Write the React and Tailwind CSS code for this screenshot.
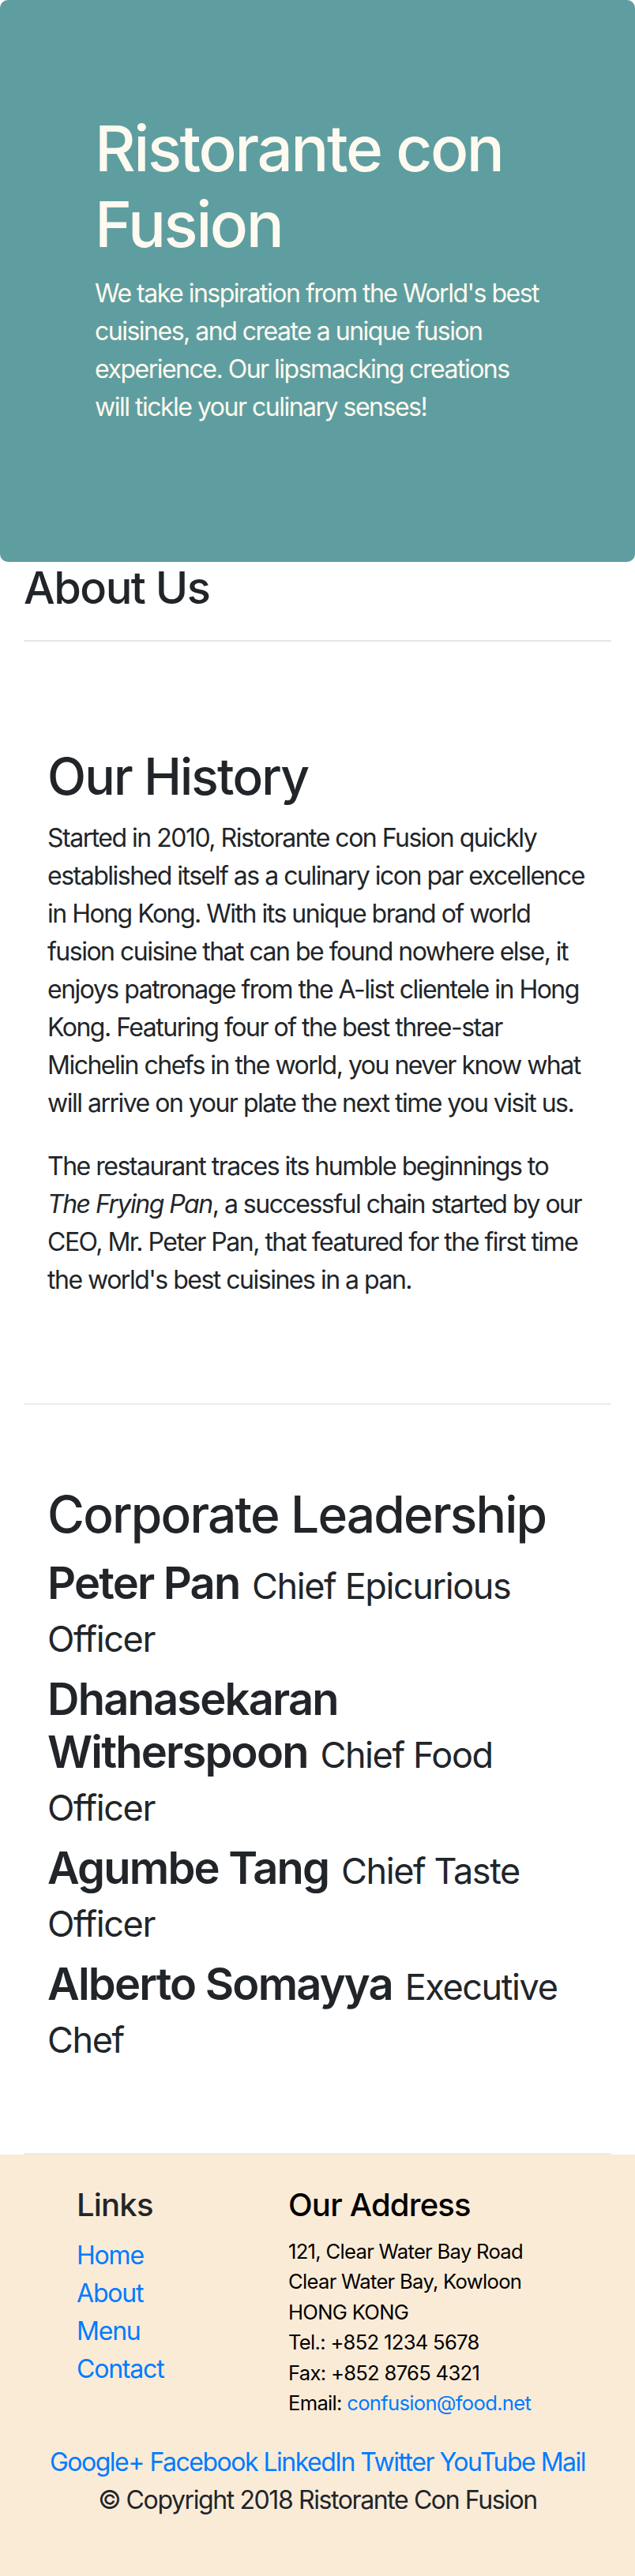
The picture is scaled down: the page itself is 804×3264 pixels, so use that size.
import React from 'react'

const leaders = [
  { name: 'Peter Pan', role: 'Chief Epicurious Officer' },
  { name: 'Dhanasekaran Witherspoon', role: 'Chief Food Officer' },
  { name: 'Agumbe Tang', role: 'Chief Taste Officer' },
  { name: 'Alberto Somayya', role: 'Executive Chef' },
]

const social = ['Google+', 'Facebook', 'LinkedIn', 'Twitter', 'YouTube', 'Mail']
const links = ['Home', 'About', 'Menu', 'Contact']

const body = 'text-[32px] leading-[48px] tracking-[-1.5px] whitespace-nowrap'

export default function App(){
  return (
    <div className="w-[804px] bg-white text-[#212529] font-[Inter,sans-serif]">
      {/* jumbotron */}
      <header className="bg-[#5f9ea0] text-[#fffaf0] rounded-[10px] px-[120px] py-[140px]">
        <h1 className="text-[80px] leading-[96px] font-medium tracking-[-2.5px] mb-4">Ristorante con Fusion</h1>
        <p className={body + ' mb-8'}>
          We take inspiration from the World's best<br />
          cuisines, and create a unique fusion<br />
          experience. Our lipsmacking creations<br />
          will tickle your culinary senses!
        </p>
      </header>

      <main className="px-[30px]">
        <h3 className="text-[56px] leading-[67px] font-medium tracking-[-1.5px]">About Us</h3>
        <hr className="mt-8 mb-8 border-t-2 border-[#e6e6e6]" />

        <section className="px-[30px] py-[100px] border-b-2 border-[#ebebeb]">
          <h2 className="text-[64px] leading-[77px] font-medium tracking-[-1.8px] mb-4">Our History</h2>
          <p className={body + ' mb-8'}>
            Started in 2010, Ristorante con Fusion quickly<br />
            established itself as a culinary icon par excellence<br />
            in Hong Kong. With its unique brand of world<br />
            fusion cuisine that can be found nowhere else, it<br />
            enjoys patronage from the A-list clientele in Hong<br />
            Kong. Featuring four of the best three-star<br />
            Michelin chefs in the world, you never know what<br />
            will arrive on your plate the next time you visit us.
          </p>
          <p className={body + ' mb-8'}>
            The restaurant traces its humble beginnings to<br />
            <em>The Frying Pan</em>, a successful chain started by our<br />
            CEO, Mr. Peter Pan, that featured for the first time<br />
            the world's best cuisines in a pan.
          </p>
        </section>

        <section className="px-[30px] py-[100px] border-b-2 border-[#ebebeb]">
          <h2 className="text-[64px] leading-[77px] font-medium tracking-[-1.8px] mb-4">Corporate Leadership</h2>
          <div className="max-w-[660px]">
            {leaders.map(l => (
              <div key={l.name} className="text-[56px] leading-[67px] mb-[13px]">
                <span className="font-semibold tracking-[-1.8px]">{l.name}</span>{' '}
                <span className="text-[45px] leading-[50px] tracking-[-1.4px]">{l.role}</span>
              </div>
            ))}
          </div>
        </section>
      </main>

      {/* footer */}
      <footer className="bg-[#faebd7] py-10">
        <div className="flex">
          <div className="w-[268px] ml-[97px]">
            <h5 className="text-[40px] leading-[48px] font-medium mb-4 tracking-[-0.8px]">Links</h5>
            <ul className="text-[32px] leading-[48px] text-[#007bff] tracking-[-1.2px] mb-8">
              {links.map(t => <li key={t}><a>{t}</a></li>)}
            </ul>
          </div>
          <div>
            <h5 className="text-[40px] leading-[48px] font-medium mb-4 text-black tracking-[-0.8px]">Our Address</h5>
            <address className="not-italic text-[25.6px] leading-[38.4px] text-black tracking-[-0.7px] mb-8">
              121, Clear Water Bay Road<br />
              Clear Water Bay, Kowloon<br />
              HONG KONG<br />
              Tel.: +852 1234 5678<br />
              Fax: +852 8765 4321<br />
              Email: <a className="text-[#007bff]">confusion@food.net</a>
            </address>
          </div>
        </div>
        <div className="text-center text-[32px] leading-[48px] text-[#007bff] tracking-[-1.5px]">
          {social.map((s, i) => (
            <React.Fragment key={s}>{i > 0 && ' '}<a>{s}</a></React.Fragment>
          ))}
        </div>
        <p className="text-center text-[32px] leading-[48px] tracking-[-1.4px] mb-8">© Copyright 2018 Ristorante Con Fusion</p>
      </footer>
    </div>
  )
}
